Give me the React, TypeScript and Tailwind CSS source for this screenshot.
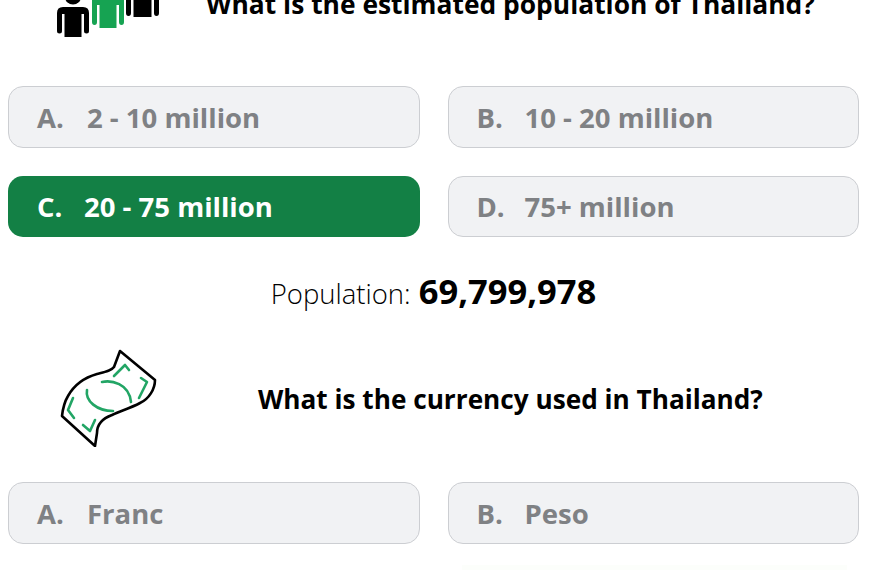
import React from 'react';

function Option({ letter, text, gap, short, picked }: { letter: string; text: string; gap: string; short?: boolean; picked?: boolean }) {
  if (picked) {
    return (
      <div className="h-[61px] rounded-[15px] bg-[#138045] flex items-center pl-[29px] pt-[1px] text-white font-bold text-[27.5px] whitespace-nowrap">
        <span className={gap}>{letter}</span>
        <span>{text}</span>
      </div>
    );
  }
  return (
    <div className={`${short ? 'h-[61px] pt-[1px]' : 'h-[62px] pt-[2px]'} rounded-[15px] bg-[#f1f2f4] border border-[#ccced2] flex items-center pl-[28px] text-[#7f8184] font-bold text-[27.5px] whitespace-nowrap`}>
      <span className={gap}>{letter}</span>
      <span>{text}</span>
    </div>
  );
}

function PeopleIcon() {
  return (
    <svg width="104" height="38" viewBox="0 0 104 38" className="block">
      <g fill="#000">
        <ellipse cx="16" cy="-3" rx="8" ry="7.5" />
        <path d="M6 7 Q0 7 0 13 V31 Q0 33.5 2.5 33.5 Q5 33.5 5 31 V14 H7.5 V37 H24.5 V14 H27 V31 Q27 33.5 29.5 33.5 Q32 33.5 32 31 V13 Q32 7 26 7 Z" />
        <path d="M69 0 V13 Q69 16 71.5 16 Q74 16 74 13 V0 H76.5 V17 H94.5 V0 H97 V13 Q97 16 99.5 16 Q102 16 102 13 V0 Z" />
      </g>
      <path fill="#16a352" d="M35 0 V22 Q35 25 37.5 25 Q40 25 40 22 V5 H42.5 V28 H59.5 V5 H62 V22 Q62 25 64.5 25 Q67 25 67 22 V0 Z" />
    </svg>
  );
}

function MoneyIcon() {
  return (
    <svg width="98" height="98" viewBox="0 0 98 98" fill="none" className="block" strokeLinecap="round" strokeLinejoin="round">
      <path stroke="#000" strokeWidth="2.6" d="M61 2 L96 31 C96 40 90 50 81 54 C70 60 60 62 53 66 C42 70 38 76 38 84 L36 97 L3 67 C4 58 6 52 9 47 C14 38 24 29 38 25 C46 23 52 22 55 18 Z" />
      <g stroke="#22a565" strokeWidth="2.6">
        <path d="M55 27 L66 16 L70 21" />
        <path d="M82 29 L88 33 L80 49" />
        <path d="M43 33 C52 31 70 34 72 53" />
        <path d="M28 41 C26 52 38 62 54 62" />
        <path d="M14 49 L9 61 L15 69" />
        <path d="M24 76 L31 82 L36 71" />
      </g>
    </svg>
  );
}

export default function App() {
  return (
    <div className="w-[870px] h-[570px] overflow-hidden bg-white text-black font-['Open_Sans','Noto_Sans',sans-serif]">
      <div className="h-[38px] flex">
        <div className="w-[57px] shrink-0" />
        <PeopleIcon />
        <div className="ml-[45px] text-[26.4px] font-bold leading-[34px] -mt-[13px] h-[34px] whitespace-nowrap">What is the estimated population of Thailand?</div>
      </div>
      <div className="mt-[48px] px-[8px] w-[867px] grid grid-cols-2 gap-x-[28px] gap-y-[28px]">
        <Option letter="A." text="2 - 10 million" gap="w-[50px]" />
        <Option letter="B." text="10 - 20 million" gap="w-[48px]" />
        <Option letter="C." text="20 - 75 million" gap="w-[47px]" picked />
        <Option letter="D." text="75+ million" gap="w-[48px]" short />
      </div>
      <div className="mt-[28px] h-[48px] pr-[3px] flex items-baseline justify-center text-[27.5px]">
        <span className="font-light mr-[1px]">Population:&nbsp;</span>
        <span className="font-bold text-[34.5px]">69,799,978</span>
      </div>
      <div className="mt-[36px] h-[98px] flex items-center">
        <div className="ml-[59px] w-[199px] shrink-0"><MoneyIcon /></div>
        <div className="text-[26.2px] font-bold whitespace-nowrap relative top-[2px]">What is the currency used in Thailand?</div>
      </div>
      <div className="mt-[35px] px-[8px] w-[867px] grid grid-cols-2 gap-x-[28px]">
        <Option letter="A." text="Franc" gap="w-[50px]" />
        <Option letter="B." text="Peso" gap="w-[48px]" />
      </div>
      <div className="mt-[21px] ml-[462px] w-[385px] h-[5px] bg-[#fcfefb]" />
    </div>
  );
}
